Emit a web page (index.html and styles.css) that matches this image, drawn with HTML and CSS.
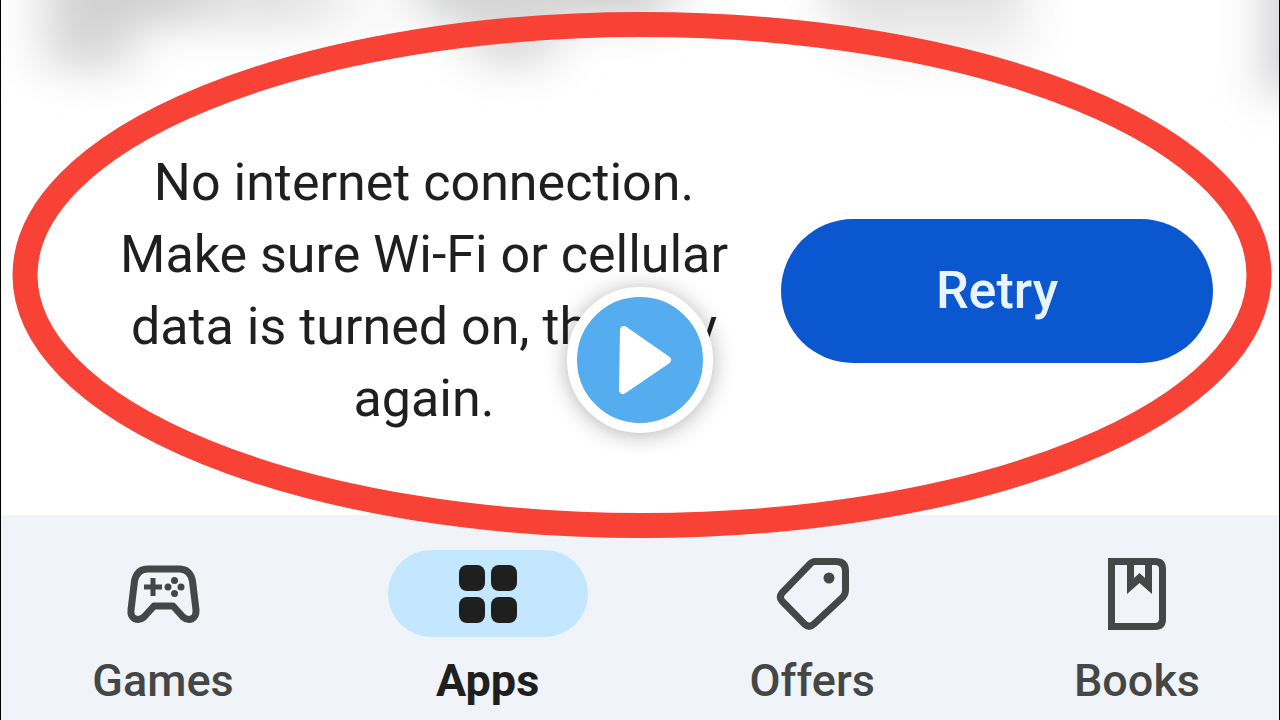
FILE: index.html
```html
<!DOCTYPE html>
<html lang="en">
<head>
    <meta charset="UTF-8">
    <meta name="viewport" content="width=device-width, initial-scale=1.0">
    <title>No internet connection</title>
    <link rel="stylesheet" href="styles.css">
</head>
<body>
    <div class="screen">
        <main class="content">
            <svg class="list-blur" viewBox="0 0 1280 140" preserveAspectRatio="none" aria-hidden="true">
                <defs>
                    <filter id="soft" x="-50%" y="-100%" width="200%" height="300%">
                        <feGaussianBlur stdDeviation="26 20"/>
                    </filter>
                </defs>
                <g filter="url(#soft)">
                    <rect x="45" y="-60" width="85" height="130" fill="#d6d6d6"/>
                    <rect x="60" y="-60" width="260" height="85" fill="#d0d0d0"/>
                    <rect x="200" y="-60" width="180" height="95" fill="#eeeeee" opacity="0.6"/>
                    <rect x="420" y="-60" width="250" height="80" fill="#cdcfce"/>
                    <rect x="475" y="-60" width="75" height="125" fill="#d6d6d6"/>
                    <rect x="835" y="-60" width="185" height="90" fill="#cccecd"/>
                    <rect x="850" y="-20" width="180" height="85" fill="#eeeeee" opacity="0.7"/>
                    <rect x="1272" y="-60" width="60" height="155" fill="#c4c4c8"/>
                </g>
            </svg>
            <p class="message">No internet connection. Make sure Wi-Fi or cellular data is turned on, then try again.</p>
            <button type="button" class="retry">Retry</button>
            <svg class="highlight" viewBox="0 0 1260 525" preserveAspectRatio="none" aria-hidden="true">
                <ellipse cx="630" cy="262.5" rx="617" ry="250" fill="none" stroke="#f74235" stroke-width="25"/>
            </svg>
        </main>

        <nav class="tabs">
            <a class="tab" href="#games">
                <span class="tab-icon">
                    <svg width="88" height="88" viewBox="0 0 88 88" fill="none" stroke="#444746" stroke-width="7" stroke-linejoin="round">
                        <path d="M29 19H60Q71 19 73.500 31L77 60C77.500 69 70 72 64 67L54 56H35L25 67C19 72 11 69 12 60L15.500 31Q18 19 29 19Z"/>
                        <path d="M25 37H43M34 28V46" stroke-width="5"/>
                        <g fill="#444746" stroke="none">
                            <circle cx="55.500" cy="30.500" r="3.500"/>
                            <circle cx="49" cy="37" r="3.500"/>
                            <circle cx="62" cy="37" r="3.500"/>
                            <circle cx="55.500" cy="43.500" r="3.500"/>
                        </g>
                    </svg>
                </span>
                <span class="tab-label">Games</span>
            </a>
            <a class="tab active" href="#apps" aria-current="page">
                <span class="tab-icon">
                    <svg width="88" height="88" viewBox="0 0 88 88" fill="#1f1f1f">
                        <rect x="15" y="15" width="26" height="26" rx="8"/>
                        <rect x="47" y="15" width="26" height="26" rx="8"/>
                        <rect x="15" y="47" width="26" height="26" rx="8"/>
                        <rect x="47" y="47" width="26" height="26" rx="8"/>
                    </svg>
                </span>
                <span class="tab-label">Apps</span>
            </a>
            <a class="tab" href="#offers">
                <span class="tab-icon">
                    <svg width="88" height="88" viewBox="0 0 88 88" fill="none" stroke="#444746" stroke-width="7" stroke-linejoin="round">
                        <path d="M47 11.500H68Q77.500 11.500 77.500 21V41Q77.500 44 75 47L46 74Q41 78.500 36.500 74L14 51Q10.500 47.500 14 43L42 14Q44.500 11.500 47 11.500Z"/>
                        <circle cx="61" cy="28" r="5.500" fill="#444746" stroke="none"/>
                    </svg>
                </span>
                <span class="tab-label">Offers</span>
            </a>
            <a class="tab" href="#books">
                <span class="tab-icon">
                    <svg width="88" height="88" viewBox="0 0 88 88" fill="none" stroke="#444746" stroke-width="7">
                        <path d="M18.500 11.500H62Q69.500 11.500 69.500 19V69Q69.500 76.500 62 76.500H18.500Z"/>
                        <path fill="#444746" stroke="none" fill-rule="evenodd" d="M34 12H59V44L46.500 33L34 44ZM41 15V28L46.500 23L52 28V15Z"/>
                    </svg>
                </span>
                <span class="tab-label">Books</span>
            </a>
        </nav>

        <button type="button" class="play" aria-label="Play">
            <svg width="56" height="72" viewBox="0 0 56 72" fill="#fff" stroke="#fff" stroke-width="8" stroke-linejoin="round">
                <path d="M7 6L50 36L6 66Z"/>
            </svg>
        </button>
    </div>
</body>
</html>
```
FILE: styles.css
```css
* {
    box-sizing: border-box;
}
body {
    margin: 0;
    font-family: Roboto, "Liberation Sans", sans-serif;
    background-color: #fff;
}
.screen {
    position: relative;
    display: flex;
    flex-direction: column;
    min-height: 100vh;
    border: solid #000;
    border-width: 0 1px;
}

/* message area, with the blurred rows of the list above it */
.content {
    position: relative;
    flex: 1;
    display: flex;
    align-items: center;
    gap: 52px;
    padding: 66px 66px 0 118px;
}
.list-blur {
    position: absolute;
    z-index: -1;
    top: 0;
    left: 0;
    width: 100%;
    height: 140px;
}
.message {
    flex: 1;
    margin: 0;
    font-size: 52px;
    line-height: 72px;
    text-align: center;
    color: #1f1f1f;
}
.retry {
    width: 432px;
    height: 144px;
    border: none;
    border-radius: 72px;
    background-color: #0b57d0;
    color: #e8f4ff;
    font-family: inherit;
    font-size: 52px;
    font-weight: 500;
    cursor: pointer;
}
.highlight {
    position: absolute;
    z-index: 1;
    top: 12px;
    left: 11px;
    width: calc(100% - 18px);
    height: calc(100% + 11px);
    pointer-events: none;
}

/* bottom navigation */
.tabs {
    display: flex;
    justify-content: space-between;
    padding: 35px 42px 15px 62px;
    background-color: #f0f3f8;
}
.tab {
    display: flex;
    flex-direction: column;
    align-items: center;
    gap: 20px;
    width: 200px;
    color: #444746;
    text-decoration: none;
}
.tab-icon {
    display: flex;
    justify-content: center;
    width: 100%;
    height: 87px;
    border-radius: 44px;
}
.tab-label {
    font-size: 45px;
    font-weight: 500;
    line-height: 48px;
}
.active {
    color: #1f1f1f;
}
.active .tab-icon {
    background-color: #c2e7ff;
}
.active .tab-label {
    font-weight: 700;
}

.play {
    position: absolute;
    z-index: 2;
    top: 50%;
    left: 50%;
    display: flex;
    align-items: center;
    justify-content: center;
    width: 146px;
    height: 146px;
    padding: 0 0 0 10px;
    border: 10px solid #fff;
    border-radius: 50%;
    background-color: #55acee;
    box-shadow: 0 2px 22px rgba(0, 0, 0, 0.3);
    transform: translate(-50%, -50%);
    cursor: pointer;
}
```
